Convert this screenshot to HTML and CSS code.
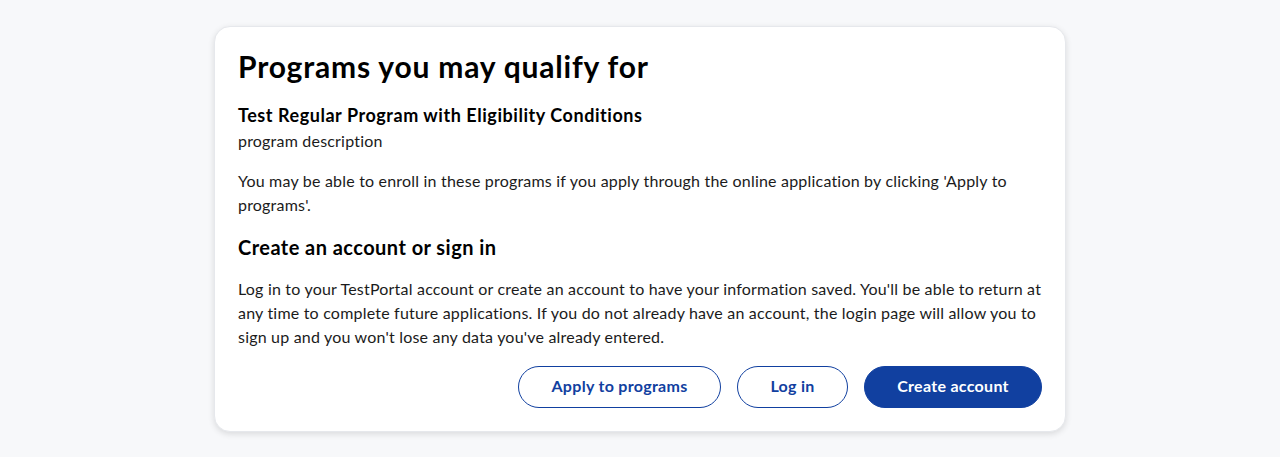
FILE: index.html
```html
<!DOCTYPE html>
<html lang="en">
<head>
<meta charset="utf-8">
<title>Programs you may qualify for</title>
<link rel="stylesheet" href="styles.css">
</head>
<body>
<main class="page">
  <section class="card">
    <h1 class="title">Programs you may qualify for</h1>
    <div class="program">
      <h3 class="program-name">Test Regular Program with Eligibility Conditions</h3>
      <p class="program-desc">program description</p>
    </div>
    <p class="text">You may be able to enroll in these programs if you apply through the online application by clicking 'Apply to programs'.</p>
    <h2 class="subtitle">Create an account or sign in</h2>
    <p class="text">Log in to your TestPortal account or create an account to have your information saved. You'll be able to return at any time to complete future applications. If you do not already have an account, the login page will allow you to sign up and you won't lose any data you've already entered.</p>
    <div class="actions">
      <button class="btn btn-outline btn-apply">Apply to programs</button>
      <button class="btn btn-outline btn-login">Log in</button>
      <button class="btn btn-primary btn-create">Create account</button>
    </div>
  </section>
</main>
</body>
</html>
```
FILE: styles.css
```css
* { box-sizing: border-box; }
html, body { margin: 0; padding: 0; }
body {
  background: #f7f8fa;
  font-family: Lato, "Noto Sans", sans-serif;
  color: #1b1b1b;
  height: 457px;
  overflow: hidden;
}
.page {
  display: flex;
  justify-content: center;
  padding-top: 26px;
}
.card {
  width: 852px;
  background: #ffffff;
  border: 1px solid #e6e8ec;
  border-radius: 16px;
  box-shadow: 0 2px 6px rgba(0, 0, 0, 0.12);
  padding: 23px;
  display: flex;
  flex-direction: column;
}
.title {
  margin: 0;
  font-size: 30px;
  line-height: 36px;
  font-weight: 700;
  letter-spacing: 0.8px;
  color: #000;
  position: relative;
  top: -2px;
}
.program { margin-top: 15px; }
.program-name {
  margin: 0;
  font-size: 18px;
  line-height: 28px;
  font-weight: 700;
  letter-spacing: 0.55px;
  color: #000;
}
.program-desc {
  margin: 0;
  font-size: 16px;
  line-height: 24px;
  letter-spacing: 0.2px;
}
.text {
  margin: 16px 0 0;
  font-size: 16px;
  line-height: 24px;
  letter-spacing: 0.2px;
}
.subtitle {
  margin: 16px 0 0;
  font-size: 20px;
  line-height: 28px;
  font-weight: 700;
  letter-spacing: 0.45px;
  color: #000;
}
.actions {
  display: flex;
  justify-content: flex-end;
  gap: 16px;
  margin-top: 17px;
}
.btn {
  height: 42px;
  border-radius: 21px;
  font-family: inherit;
  font-size: 16px;
  font-weight: 700;
  letter-spacing: 0.3px;
  cursor: pointer;
  padding: 0 16px 3px;
}
.btn-outline {
  background: #fff;
  color: #1140a0;
  border: 1px solid #1140a0;
}
.btn-primary {
  background: #1140a0;
  color: #fff;
  border: 1px solid #1140a0;
}
.btn-apply { width: 203px; }
.btn-login { width: 111px; }
.btn-create { width: 178px; }
```
